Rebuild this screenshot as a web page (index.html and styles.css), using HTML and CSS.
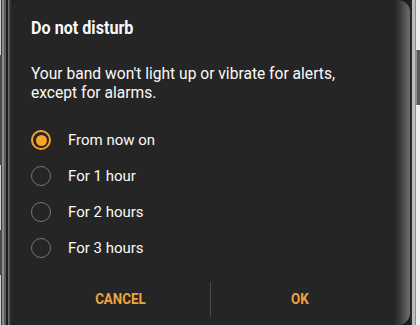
FILE: index.html
```html
<!DOCTYPE html>
<html>
<head>
<meta charset="utf-8">
<link rel="stylesheet" href="styles.css">
</head>
<body>
<div class="device">
  <div class="bezel-left"><span class="key key-l1"></span><span class="key key-l2"></span></div>
  <div class="screen">
    <h1 class="title"><span class="cond">Do not disturb</span></h1>
    <p class="msg">Your band won't light up or vibrate for alerts,<br>except for alarms.</p>
    <ul class="options">
      <li class="opt"><span class="radio on"></span>From now on</li>
      <li class="opt"><span class="radio"></span>For 1 hour</li>
      <li class="opt"><span class="radio"></span>For 2 hours</li>
      <li class="opt"><span class="radio"></span>For 3 hours</li>
    </ul>
    <div class="actions">
      <button class="btn"><span class="cond">CANCEL</span></button>
      <span class="divider"></span>
      <button class="btn"><span class="cond">OK</span></button>
    </div>
  </div>
  <div class="bezel-right"><span class="key key-r"></span></div>
</div>
</body>
</html>
```
FILE: styles.css
```css
html, body {
  margin: 0;
  padding: 0;
  background: #1c1c1c;
}
body {
  width: 420px;
  height: 325px;
  overflow: hidden;
  font-family: Roboto, "Liberation Sans", sans-serif;
}
.device {
  display: flex;
  height: 325px;
}
.bezel-left {
  width: 12px;
  flex: none;
  display: flex;
  flex-direction: column;
  background: linear-gradient(to right, #cfcfcf 0 1px, #3a3a3a 1px 2px, #8c8c8c 2px 4px, #5c5c5c 4px 6px, #1d1d1d 6px 8px, #6d6d6d 8px 9px, #4a4a4a 9px 10px, #2c2c2c 10px 12px);
}
.key {
  display: block;
  width: 2px;
  background: #4a4a4a;
}
.key-l1 { margin-top: 55px; height: 110px; }
.key-l2 { margin-top: 65px; height: 45px; }
.screen {
  flex: 1;
  padding: 16px 21px 0 19px;
  background: linear-gradient(to right, #252525 0, #252525 calc(100% - 16px), #3a3a3a calc(100% - 10px), #6f6f6f 100%);
  border-radius: 6px 12px 12px 6px;
  color: #fafafa;
  display: flex;
  flex-direction: column;
}
.bezel-right {
  width: 10px;
  flex: none;
  display: flex;
  flex-direction: column;
  align-items: flex-end;
  background: linear-gradient(to right, #262626 0 2px, #bdbdbd 2px 5px, #8a8a8a 5px 6px, #ededed 6px 10px);
}
.key-r {
  width: 3px;
  margin-top: 50px;
  height: 55px;
  background: #5a5a5a;
  border-left: 1px solid #8f8f8f;
}
.cond {
  display: inline-block;
  transform: scaleX(0.85);
  transform-origin: left center;
}
.title {
  margin: 0;
  font-size: 19px;
  line-height: 24px;
  font-weight: 700;
  white-space: nowrap;
}
.msg {
  margin: 25px 0 0;
  font-size: 15.6px;
  line-height: 19px;
  white-space: nowrap;
}
.options {
  list-style: none;
  margin: 19px 0 0;
  padding: 0;
}
.opt {
  display: flex;
  align-items: center;
  height: 36px;
  font-size: 15px;
  gap: 17px;
}
.radio {
  box-sizing: border-box;
  width: 20px;
  height: 20px;
  border: 1.5px solid #767676;
  border-radius: 50%;
  flex: none;
  display: flex;
  align-items: center;
  justify-content: center;
}
.radio.on {
  border: 2px solid #f2a232;
}
.radio.on::after {
  content: "";
  width: 11px;
  height: 11px;
  border-radius: 50%;
  background: #f5a42e;
}
.actions {
  display: flex;
  align-items: center;
  margin-top: 15px;
  height: 36px;
}
.btn {
  flex: 1;
  background: none;
  border: 0;
  padding: 0;
  color: #eda43a;
  font-family: Roboto, "Liberation Sans", sans-serif;
  font-weight: 700;
  font-size: 15px;
  height: 36px;
}
.btn .cond {
  transform: scaleX(0.89);
  transform-origin: center center;
}
.divider {
  width: 1px;
  height: 35px;
  background: #4a4a4a;
  flex: none;
}
```
